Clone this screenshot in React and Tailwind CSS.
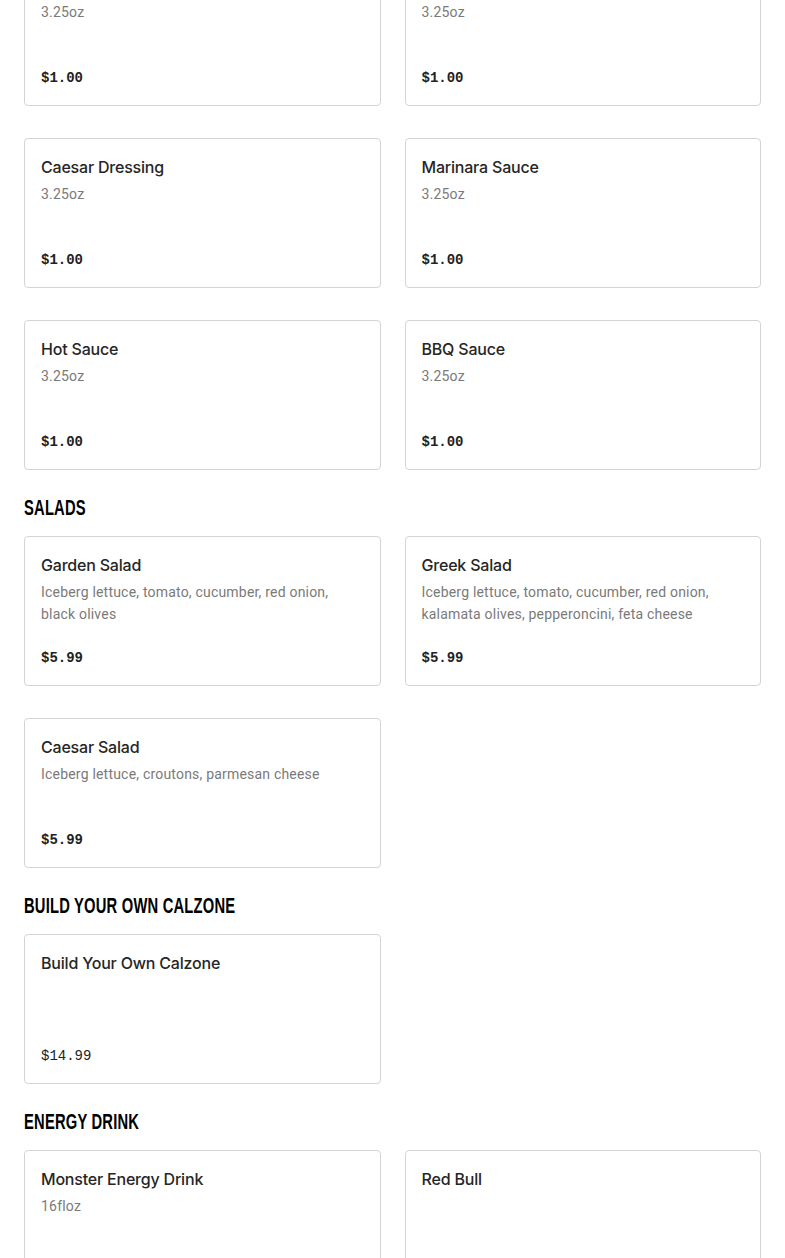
import React from 'react';

const sections = [
    {
        title: null,
        items: [
            { name: 'Ranch Dressing', desc: '3.25oz', price: '$1.00' },
            { name: 'Blue Cheese Dressing', desc: '3.25oz', price: '$1.00' },
            { name: 'Caesar Dressing', desc: '3.25oz', price: '$1.00' },
            { name: 'Marinara Sauce', desc: '3.25oz', price: '$1.00' },
            { name: 'Hot Sauce', desc: '3.25oz', price: '$1.00' },
            { name: 'BBQ Sauce', desc: '3.25oz', price: '$1.00' },
        ],
    },
    {
        title: 'Salads',
        items: [
            { name: 'Garden Salad', desc: 'Iceberg lettuce, tomato, cucumber, red onion, black olives', price: '$5.99' },
            { name: 'Greek Salad', desc: 'Iceberg lettuce, tomato, cucumber, red onion, kalamata olives, pepperoncini, feta cheese', price: '$5.99' },
            { name: 'Caesar Salad', desc: 'Iceberg lettuce, croutons, parmesan cheese', price: '$5.99' },
        ],
    },
    {
        title: 'Build Your Own Calzone',
        items: [
            { name: 'Build Your Own Calzone', desc: '', price: '$14.99', light: true },
        ],
    },
    {
        title: 'Energy Drink',
        items: [
            { name: 'Monster Energy Drink', desc: '16floz', price: '$3.49' },
            { name: 'Red Bull', desc: '', price: '$3.49' },
        ],
    },
];

function Card({ item }) {
    return (
        <div className="flex flex-col h-[150px] border border-[#d4d4d4] rounded-[4px] bg-white pl-4 pr-8 pt-[18px] pb-[17px]">
            <p className="font-['Inter','Noto_Sans',sans-serif] font-medium text-[16px] leading-[20px] text-[#262626] tracking-[-0.2px]">
                {item.name}
            </p>
            {item.desc && (
                <p className="mt-[6px] font-['Roboto','Liberation_Sans',sans-serif] text-[14px] leading-[22px] text-[#7a7a7a] tracking-[0.2px]">
                    {item.desc}
                </p>
            )}
            <p className={`mt-auto font-['Liberation_Mono',monospace] text-[14px] leading-[20px] text-[#222] ${item.light ? 'font-normal' : 'font-bold'}`}>
                {item.price}
            </p>
        </div>
    );
}

export default function App() {
    return (
        <div className="bg-white min-h-screen overflow-hidden">
            <div className="-mt-[44px] px-6 pb-10">
                {sections.map((s, i) => (
                    <div key={i}>
                        {s.title && (
                            <h2 className="mt-6 mb-[14px] h-[28px] leading-[28px] whitespace-nowrap">
                                <span className="inline-block origin-left scale-x-[0.67] font-['Liberation_Sans',sans-serif] font-bold uppercase text-[22px] text-black tracking-[0.3px]">
                                    {s.title}
                                </span>
                            </h2>
                        )}
                        <div className="grid grid-cols-2 gap-x-6 gap-y-8">
                            {s.items.map((it) => (
                                <Card key={it.name} item={it} />
                            ))}
                        </div>
                    </div>
                ))}
            </div>
        </div>
    );
}
